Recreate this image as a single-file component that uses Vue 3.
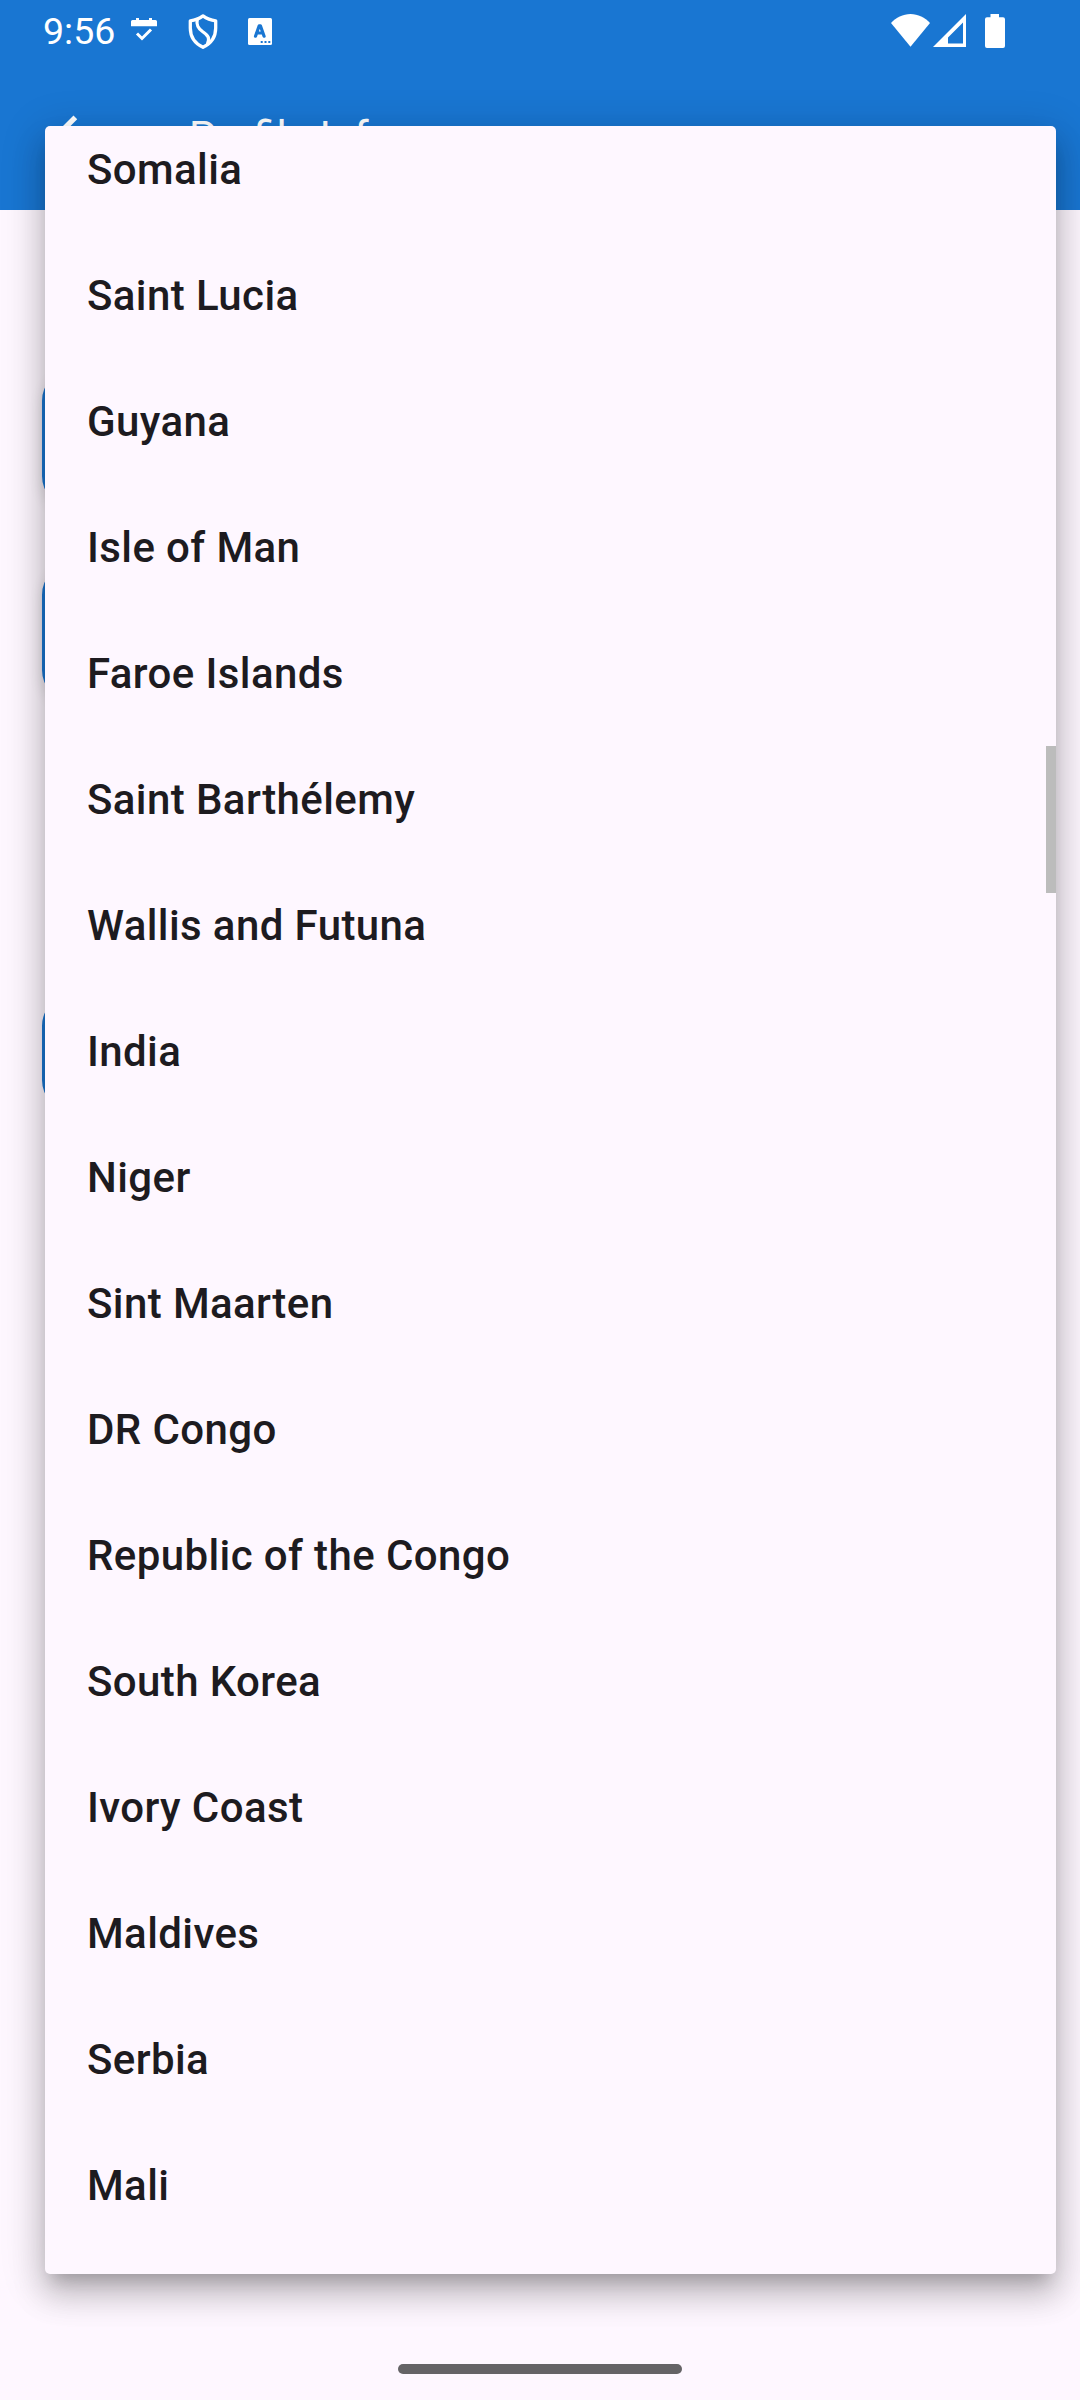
<script setup>
const countries = [
  'Somalia',
  'Saint Lucia',
  'Guyana',
  'Isle of Man',
  'Faroe Islands',
  'Saint Barthélemy',
  'Wallis and Futuna',
  'India',
  'Niger',
  'Sint Maarten',
  'DR Congo',
  'Republic of the Congo',
  'South Korea',
  'Ivory Coast',
  'Maldives',
  'Serbia',
  'Mali',
]
</script>

<template>
  <div class="screen">
    <header class="top">
      <div class="status">
        <span class="clock">9:56</span>
        <svg class="calendar" width="26" height="24" viewBox="0 0 26 24">
          <path fill="#fff" d="M0 8.300V3.500Q0 2 1.500 2H5V0H8V2H18V0H21V2H24.500Q26 2 26 3.500V8.300Z" />
          <path fill="none" stroke="#fff" stroke-width="3" d="M6 15.500L11 20.500L20 11.500" />
        </svg>
        <svg class="shield" width="30" height="36" viewBox="0 0 30 36">
          <path fill="none" stroke="#fff" stroke-width="3.300" stroke-linejoin="round" d="M15 1.900C11.500 4.500 6.500 6.300 2.300 6.800V14C2.300 23 7 29.500 15 33.300C23 29.500 27.700 23 27.700 14V6.800C23.500 6.300 18.500 4.500 15 1.900Z" />
          <path fill="none" stroke="#fff" stroke-width="3.300" stroke-linecap="round" d="M9.200 5.500C8.300 11 9.500 14 14.500 17.500C20.500 21.500 22 24.500 19.500 30" />
        </svg>
        <svg class="letter" width="24" height="27" viewBox="0 0 24 27">
          <rect width="24" height="27" rx="1.500" fill="#fff" />
          <path fill="none" stroke="#1976d2" stroke-width="3.200" stroke-linecap="round" stroke-linejoin="round" d="M7.500 18.200L11.200 7.800H12.400L16.100 18.200M8.500 15H15" />
          <path fill="#1976d2" d="M12.700 23h2v2h-2zM16.500 23h2v2h-2zM20.300 23h2v2h-2z" />
        </svg>
        <span class="spacer"></span>
        <svg class="wifi" width="39" height="33" viewBox="0 0 39 33">
          <path fill="#fff" d="M19.500 32.700L0 9C5 3.500 12 0 19.500 0S34 3.500 39 9Z" />
        </svg>
        <svg class="signal" width="33" height="33" viewBox="0 0 33 33">
          <path fill="#fff" fill-rule="evenodd" d="M33 0V33H0ZM30 8.500L15 23.500V29.500H30Z" />
        </svg>
        <svg class="battery" width="20" height="34" viewBox="0 0 20 34">
          <path fill="#fff" d="M5.500 0H14V3.200H18Q20 3.200 20 5.200V32Q20 34 18 34H2Q0 34 0 32V5.200Q0 3.200 2 3.200H5.500Z" />
        </svg>
      </div>
      <div class="appbar">
        <svg width="63" height="63" viewBox="0 0 24 24">
          <path fill="#fff" d="M20 11H7.830l5.590-5.590L12 4l-8 8 8 8 1.410-1.410L7.830 13H20v-2z" />
        </svg>
        <h1>Profile Info</h1>
      </div>
    </header>

    <main class="form">
      <div class="field raised"></div>
      <div class="field raised second"></div>
      <div class="field third"></div>
    </main>

    <div class="menu">
      <ul>
        <li v-for="name in countries" :key="name">{{ name }}</li>
      </ul>
      <div class="scrollbar"></div>
    </div>

    <div class="home"></div>
  </div>
</template>

<style>
body {
  margin: 0;
}
</style>

<style scoped>
.screen {
  position: relative;
  display: flex;
  flex-direction: column;
  box-sizing: border-box;
  width: 1080px;
  height: 2400px;
  overflow: hidden;
  background: #fef7ff;
  font-family: Roboto, 'Liberation Sans', sans-serif;
}

.top {
  height: 210px;
  background: #1976d2;
  color: #fff;
}

.status {
  display: flex;
  align-items: flex-start;
  height: 63px;
}

.clock {
  width: 88px;
  margin-left: 43px;
  margin-top: 9px;
  font-size: 37.500px;
  line-height: 44px;
}

.calendar {
  margin-top: 17.500px;
}

.shield {
  margin: 14px 0 0 30.500px;
}

.letter {
  margin: 18px 0 0 30.500px;
}

.spacer {
  flex: 1;
}

.wifi {
  margin-top: 14px;
}

.signal {
  margin: 14px 19px 0 3px;
}

.battery {
  margin: 14px 75px 0 0;
}

.appbar {
  display: flex;
  align-items: center;
  height: 147px;
  padding-left: 42px;
}

h1 {
  margin: 0 0 0 84px;
  font-size: 42px;
  font-weight: 400;
  line-height: 50px;
}

.form {
  padding: 160px 42px 0;
}

.field {
  box-sizing: border-box;
  height: 137px;
  border: 4px solid #1976d2;
  border-radius: 31px;
}

.raised {
  background: #fef7ff;
  box-shadow: 0 5px 14px rgba(0, 0, 0, 0.12);
}

.second {
  margin-top: 57px;
}

.third {
  height: 116px;
  margin-top: 294px;
}

.menu {
  position: absolute;
  top: 126px;
  left: 45px;
  width: 1011px;
  height: 2148px;
  border-radius: 5px;
  background: #fef7ff;
  box-shadow:
    0 13px 16px -8px rgba(0, 0, 0, 0.2),
    0 21px 31px 3px rgba(0, 0, 0, 0.15),
    0 8px 43px 5px rgba(0, 0, 0, 0.14);
}

ul {
  height: 100%;
  margin: 0;
  padding: 0;
  overflow: hidden;
  list-style: none;
}

li {
  height: 126px;
  padding-left: 42px;
  color: #1d1b20;
  font-size: 42px;
  font-weight: 500;
  line-height: 126px;
  letter-spacing: 0.394px;
}

li:first-child {
  margin-top: -19px;
}

.scrollbar {
  position: absolute;
  top: 620px;
  right: 0;
  width: 10px;
  height: 147px;
  background: #bcbcbc;
}

.home {
  width: 284px;
  height: 10px;
  margin: auto auto 26px;
  border-radius: 5px;
  background: #656366;
}
</style>
